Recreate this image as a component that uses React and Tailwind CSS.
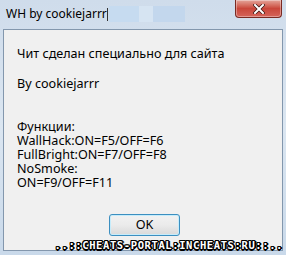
import React from "react";

const LINES = [
  "Функции:",
  "WallHack:ON=F5/OFF=F6",
  "FullBright:ON=F7/OFF=F8",
  "NoSmoke:",
  "ON=F9/OFF=F11",
];

function CloseButton() {
  return (
    <div className="w-[47px] h-[18px] rounded-b-[4px] border border-t-0 border-[#7a2a22] bg-gradient-to-b from-[#e3a49a] via-[#c9463a] to-[#d5645a] flex items-center justify-center shadow-[inset_0_0_0_1px_rgba(255,255,255,0.35)]">
      <svg width="12" height="10" viewBox="0 0 12 10">
        <path d="M2 1 L10 9 M10 1 L2 9" stroke="#3b1410" strokeWidth="3.4" strokeLinecap="square" />
        <path d="M2 1 L10 9 M10 1 L2 9" stroke="#ffffff" strokeWidth="2" strokeLinecap="square" />
      </svg>
    </div>
  );
}

export default function App() {
  return (
    <div
      className="relative w-[286px] h-[255px] overflow-hidden flex flex-col bg-gradient-to-b from-[#cfdceb] via-[#dbe6f1] to-[#c9d9ea]"
      style={{ fontFamily: '"Noto Sans", "Open Sans", sans-serif' }}
    >
      {/* title bar */}
      <div className="h-[29px] flex items-start pl-[6px] pr-[4px] shrink-0">
        <div className="flex items-center h-[28px]">
          <span className="text-[12px] text-black leading-none">WH by cookiejarrr</span>
          <span className="w-px h-[13px] bg-[#333]" />
          <div className="flex ml-[1px] h-[16px]">
            <div className="w-[30px] bg-[#c6dbf0]" />
            <div className="w-[14px] bg-[#d6e4f2]" />
            <div className="w-[32px] bg-[#c3d7ed]" />
          </div>
        </div>
        <div className="ml-auto">
          <CloseButton />
        </div>
      </div>

      {/* client area */}
      <div className="flex-1 mx-[3px] mb-[4px] border border-[#8397ad] bg-[#f0f0f0] flex flex-col text-[12.6px] text-black leading-[14px]">
        <div className="pl-[13px] pt-[17px] flex flex-col">
          <div>Чит сделан специально для сайта</div>
          <div className="mt-[16px]">By cookiejarrr</div>
          <div className="mt-[29px] flex flex-col">
            {LINES.map((l) => (
              <div key={l}>{l}</div>
            ))}
          </div>
        </div>
        <div className="flex justify-center mt-[24px] pl-[3px]">
          <button className="w-[71px] h-[22px] rounded-[3px] border border-[#3c8fc0] bg-gradient-to-b from-[#f2f2f2] via-[#ebebeb] to-[#d9d9d9] text-[12.6px] text-black leading-none shadow-[inset_0_0_0_1px_#c6ecfb]">
            OK
          </button>
        </div>
      </div>

      {/* watermark */}
      <div
        className="absolute right-[3px] top-[240px] text-[10.5px] font-bold text-white leading-none tracking-[0.6px]"
        style={{
          fontFamily: '"DejaVu Sans Mono", monospace',
          textShadow:
            "1px 0 0 #000, -1px 0 0 #000, 0 1px 0 #000, 0 -1px 0 #000, 1px 1px 0 #000, -1px -1px 0 #000, 1px -1px 0 #000, -1px 1px 0 #000, 2px 0 0 #000, 0 2px 0 #000",
        }}
      >
        ..::CHEATS-PORTAL:INCHEATS:RU::..
      </div>
    </div>
  );
}
